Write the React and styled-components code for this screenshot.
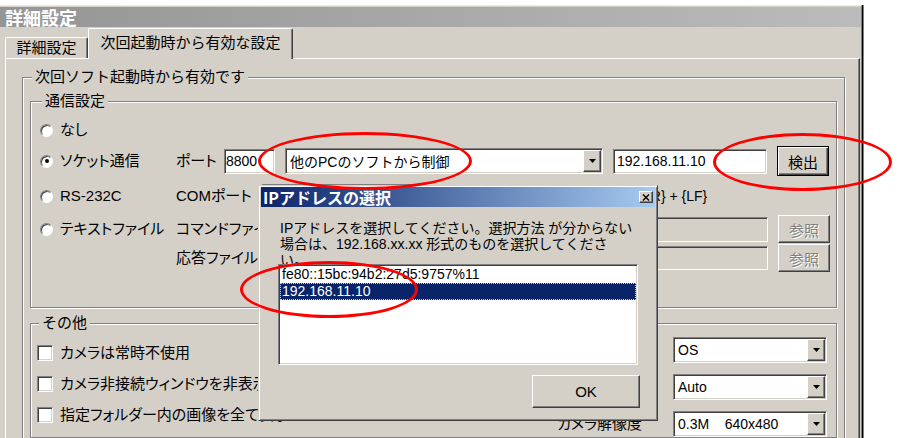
import styled, { createGlobalStyle, css } from "styled-components";

const FACE = "#d4d0c8";

const GlobalStyle = createGlobalStyle`
  html, body { margin: 0; padding: 0; background: #fff; }
  body {
    font-family: "Liberation Sans", "Noto Sans CJK JP", sans-serif;
    font-size: 15px;
    color: #000;
  }
  #root { position: relative; width: 900px; height: 438px; overflow: hidden; }
`;

const sunken = css`
  border: 1px solid;
  border-color: #808080 #fff #fff #808080;
  box-shadow: inset 1px 1px 0 #404040, inset -1px -1px 0 ${FACE};
`;

const raised = css`
  border: 1px solid;
  border-color: #fff #404040 #404040 #fff;
  box-shadow: inset -1px -1px 0 #808080;
`;

const Screen = styled.div`
  height: 438px;
  padding-top: 5px;
  box-sizing: border-box;
`;

const Window = styled.div`
  width: 862px;
  height: 100%;
  box-sizing: border-box;
  background: ${FACE};
  border-top: 1px solid #ecebe6;
  border-right: 1px solid #808080;
  box-shadow: 1px 0 0 #000, 2px 0 0 #808080;
  padding-top: 1px;
  display: flex;
  flex-direction: column;
`;

const TitleBar = styled.div`
  height: 20px;
  flex-shrink: 0;
  padding-left: 5px;
  background: linear-gradient(90deg, #959595, #bbbbbb);
  color: #fff;
  font-family: "Noto Sans CJK JP", sans-serif;
  font-weight: bold;
  font-size: 18px;
  line-height: 20px;
`;

const TabStrip = styled.div`
  height: 31px;
  flex-shrink: 0;
  display: flex;
  align-items: flex-end;
  padding-left: 5px;
`;

const Tab = styled.div`
  position: relative;
  z-index: ${(p) => (p.$active ? 2 : 0)};
  width: ${(p) => p.$w}px;
  height: ${(p) => (p.$active ? 31 : 21)}px;
  margin-bottom: ${(p) => (p.$active ? -1 : 0)}px;
  box-sizing: border-box;
  padding-bottom: ${(p) => (p.$active ? 3 : 0)}px;
  background: ${FACE};
  border-top: 1px solid #fff;
  border-left: 1px solid #fff;
  border-right: 1px solid #404040;
  box-shadow: inset -1px 0 0 #808080;
  border-radius: 2px 2px 0 0;
  display: flex;
  align-items: center;
  justify-content: center;
  font-size: 15px;
  line-height: 18px;
  white-space: nowrap;
`;

const Panel = styled.div`
  flex: 1;
  min-height: 0;
  margin: 0 1px 0 5px;
  background: ${FACE};
  border-top: 1px solid #fff;
  border-left: 1px solid #fff;
  border-right: 1px solid #404040;
  box-shadow: inset -1px 0 0 #808080;
  padding: 10px 14px 0 16px;
`;

const Group = styled.fieldset`
  margin: ${(p) => p.$mt || 0}px 0 0 0;
  padding: ${(p) => p.$pad};
  border: 1px solid #808080;
  box-shadow: inset 1px 1px 0 #fff, 1px 1px 0 #fff;
  min-width: 0;
`;

const Legend = styled.legend`
  margin-left: 2px;
  padding: 0 3px;
  background: ${FACE};
  font-size: 15px;
  line-height: 16px;
  white-space: nowrap;
`;

const Rows = styled.div`
  display: flex;
  flex-direction: column;
`;

const Row = styled.div`
  display: flex;
  align-items: center;
  height: ${(p) => p.$h}px;
`;

const Choice = styled.label`
  width: 136px;
  flex-shrink: 0;
  display: flex;
  align-items: center;
  gap: 7px;
`;

const RadioMark = styled.span`
  width: 13px;
  height: 13px;
  box-sizing: border-box;
  flex-shrink: 0;
  border-radius: 50%;
  background: #fff;
  border: 1px solid;
  border-color: #808080 #fff #fff #808080;
  box-shadow: inset 1px 1px 0 #404040;
  display: flex;
  align-items: center;
  justify-content: center;

  &::after {
    content: "";
    display: ${(p) => (p.$on ? "block" : "none")};
    width: 4px;
    height: 4px;
    border-radius: 50%;
    background: #000;
  }
`;

const CheckMark = styled.span`
  width: 16px;
  height: 16px;
  box-sizing: border-box;
  flex-shrink: 0;
  background: #fff;
  ${sunken};
`;

const Caption = styled.span`
  font-size: 15px;
  line-height: 18px;
  white-space: nowrap;
  font-feature-settings: "palt";
`;

const FieldLabel = styled.span`
  width: ${(p) => p.$w}px;
  flex-shrink: 0;
  font-size: 15px;
  line-height: 18px;
  white-space: nowrap;
  font-feature-settings: "palt";
`;

const TextInput = styled.input`
  width: ${(p) => p.$w}px;
  height: ${(p) => p.$h}px;
  margin: 0 ${(p) => p.$mr || 0}px 0 0;
  padding: 0 0 0 ${(p) => p.$pl ?? 3}px;
  box-sizing: border-box;
  flex-shrink: 0;
  ${sunken};
  background: ${(p) => (p.disabled ? FACE : "#fff")};
  color: #000;
  font: 14px "Liberation Sans", sans-serif;
  outline: none;
`;

const Combo = styled.div`
  width: ${(p) => p.$w}px;
  height: ${(p) => p.$h || 26}px;
  margin-right: ${(p) => p.$mr || 0}px;
  box-sizing: border-box;
  flex-shrink: 0;
  ${sunken};
  padding: 1px;
  background: #fff;
  display: flex;
`;

const ComboValue = styled.span`
  flex: 1;
  display: flex;
  align-items: center;
  padding-left: 3px;
  font-size: 14px;
  white-space: pre;
  overflow: hidden;
`;

const DropButton = styled.span`
  width: 18px;
  box-sizing: border-box;
  background: ${FACE};
  ${raised};
  display: flex;
  align-items: center;
  justify-content: center;
`;

const PushButton = styled.button`
  width: ${(p) => p.$w}px;
  height: ${(p) => p.$h}px;
  padding: 0;
  flex-shrink: 0;
  box-sizing: border-box;
  background: ${FACE};
  font: 15px "Liberation Sans", "Noto Sans CJK JP", sans-serif;
  color: ${(p) => (p.disabled ? "#808080" : "#000")};
  text-shadow: ${(p) => (p.disabled ? "1px 1px 0 #fff" : "none")};
  ${(p) =>
    p.$default
      ? css`
          border: 1px solid #000;
          box-shadow: inset 1px 1px 0 #fff, inset -1px -1px 0 #404040,
            inset -2px -2px 0 #808080;
        `
      : raised};
`;

const Note = styled.span`
  margin-left: ${(p) => p.$ml}px;
  font-size: 14px;
  white-space: nowrap;
`;

const OtherBody = styled.div`
  display: flex;
  justify-content: space-between;
`;

const CheckList = styled.div`
  display: flex;
  flex-direction: column;
`;

const CheckRow = styled.label`
  height: 31px;
  display: flex;
  align-items: center;
  gap: 7px;
`;

const SelectList = styled.div`
  display: flex;
  flex-direction: column;
  gap: 11px;
`;

const SelectRow = styled.div`
  display: flex;
  align-items: center;
  justify-content: flex-end;
  gap: 31px;
`;

/* IP address dialog, lying over the settings window */
const Dialog = styled.div`
  position: absolute;
  left: 258px;
  top: 185px;
  width: 400px;
  height: 236px;
  box-sizing: border-box;
  background: ${FACE};
  border: 1px solid;
  border-color: ${FACE} #404040 #404040 ${FACE};
  box-shadow: inset 1px 1px 0 #fff, inset -1px -1px 0 #808080;
  padding: 1px 2px 2px 2px;
  display: flex;
  flex-direction: column;
  z-index: 5;
`;

const DialogTitle = styled.div`
  height: 20px;
  flex-shrink: 0;
  padding: 0 2px;
  background: linear-gradient(90deg, #0a246a, #a6caf0);
  color: #fff;
  display: flex;
  align-items: center;
  justify-content: space-between;
  font-family: "Noto Sans CJK JP", sans-serif;
  font-weight: bold;
  font-size: 16px;
`;

const CloseBox = styled.span`
  width: 14px;
  height: 12px;
  box-sizing: border-box;
  background: ${FACE};
  ${raised};
  display: flex;
  align-items: center;
  justify-content: center;
`;

const DialogBody = styled.div`
  flex: 1;
  padding: 13px 17px 0 17px;
  display: flex;
  flex-direction: column;
`;

const Message = styled.div`
  height: 44px;
  overflow: hidden;
  padding-left: 2px;
  font-size: 14px;
  line-height: 16px;
`;

const MessageLine = styled.div`
  white-space: nowrap;
`;

const ListBox = styled.div`
  height: 101px;
  box-sizing: border-box;
  ${sunken};
  padding: 1px;
  background: #fff;
`;

const ListItem = styled.div`
  height: 17px;
  padding-left: 2px;
  font-size: 14px;
  line-height: 17px;
  white-space: nowrap;
  background: ${(p) => (p.$selected ? "#0a246a" : "transparent")};
  color: ${(p) => (p.$selected ? "#fff" : "#000")};
  outline: ${(p) => (p.$selected ? "1px dotted #e6d37a" : "none")};
  outline-offset: -1px;
`;

const DialogActions = styled.div`
  display: flex;
  justify-content: flex-end;
  margin: 10px -2px 0 0;
`;

const Mark = styled.div`
  position: absolute;
  left: ${(p) => p.$x}px;
  top: ${(p) => p.$y}px;
  width: ${(p) => p.$w}px;
  height: ${(p) => p.$h}px;
  box-sizing: border-box;
  border: 3px solid #f00;
  border-radius: 50%;
  pointer-events: none;
  z-index: 10;
`;

const Arrow = () => (
  <svg width="7" height="4" viewBox="0 0 7 4">
    <path d="M0 0h7L3.5 4z" fill="#000" />
  </svg>
);

const Select = ({ w, h, mr, value }) => (
  <Combo $w={w} $h={h} $mr={mr}>
    <ComboValue>{value}</ComboValue>
    <DropButton>
      <Arrow />
    </DropButton>
  </Combo>
);

const IpDialog = () => (
  <Dialog>
    <DialogTitle>
      IPアドレスの選択
      <CloseBox>
        <svg width="8" height="7" viewBox="0 0 8 7">
          <path d="M1 0.5l6 6M7 0.5l-6 6" stroke="#000" strokeWidth="1.4" />
        </svg>
      </CloseBox>
    </DialogTitle>
    <DialogBody>
      <Message>
        <MessageLine>IPアドレスを選択してください。選択方法 が分からない</MessageLine>
        <MessageLine>場合は、192.168.xx.xx 形式のものを選択してくださ</MessageLine>
        <MessageLine>い。</MessageLine>
      </Message>
      <ListBox>
        <ListItem>fe80::15bc:94b2:27d5:9757%11</ListItem>
        <ListItem $selected>192.168.11.10</ListItem>
      </ListBox>
      <DialogActions>
        <PushButton $w={108} $h={33}>OK</PushButton>
      </DialogActions>
    </DialogBody>
  </Dialog>
);

export default function App() {
  return (
    <>
      <GlobalStyle />
      <Screen>
        <Window>
          <TitleBar>詳細設定</TitleBar>
          <TabStrip>
            <Tab $w={83}>詳細設定</Tab>
            <Tab $w={205} $active>次回起動時から有効な設定</Tab>
          </TabStrip>
          <Panel>
            <Group $pad="8px 7px 0 7px">
              <Legend>次回ソフト起動時から有効です</Legend>

              <Group $pad="9px 5px 37px 9px">
                <Legend>通信設定</Legend>
                <Rows>
                  <Row $h={24}>
                    <Choice>
                      <RadioMark />
                      <Caption>なし</Caption>
                    </Choice>
                  </Row>
                  <Row $h={38}>
                    <Choice>
                      <RadioMark $on />
                      <Caption>ソケット通信</Caption>
                    </Choice>
                    <FieldLabel $w={48}>ポート</FieldLabel>
                    <TextInput $w={51} $h={25} $mr={10} $pl={1} defaultValue="8800" readOnly />
                    <Select w={318} mr={10} value="他のPCのソフトから制御" />
                    <TextInput $w={154} $h={25} $mr={10} defaultValue="192.168.11.10" readOnly />
                    <PushButton $w={52} $h={30} $default>検出</PushButton>
                  </Row>
                  <Row $h={32}>
                    <Choice>
                      <RadioMark />
                      <Caption>RS-232C</Caption>
                    </Choice>
                    <FieldLabel $w={86}>COMポート</FieldLabel>
                    <Select w={150} h={24} value="" />
                    <Note $ml={224}>{"{CR} + {LF}"}</Note>
                  </Row>
                  <Row $h={34}>
                    <Choice>
                      <RadioMark />
                      <Caption>テキストファイル</Caption>
                    </Choice>
                    <FieldLabel $w={86}>コマンドファイル</FieldLabel>
                    <TextInput $w={506} $h={25} $mr={10} disabled />
                    <PushButton $w={52} $h={28} disabled>参照</PushButton>
                  </Row>
                  <Row $h={24}>
                    <Choice />
                    <FieldLabel $w={86}>応答ファイル</FieldLabel>
                    <TextInput $w={506} $h={24} $mr={10} disabled />
                    <PushButton $w={52} $h={28} disabled>参照</PushButton>
                  </Row>
                </Rows>
              </Group>

              <Group $mt={7} $pad="6px 9px 0 6px">
                <Legend>その他</Legend>
                <OtherBody>
                  <CheckList>
                    <CheckRow>
                      <CheckMark />
                      <Caption>カメラは常時不使用</Caption>
                    </CheckRow>
                    <CheckRow>
                      <CheckMark />
                      <Caption>カメラ非接続ウィンドウを非表示にする</Caption>
                    </CheckRow>
                    <CheckRow>
                      <CheckMark />
                      <Caption>指定フォルダー内の画像を全て表示</Caption>
                    </CheckRow>
                  </CheckList>
                  <SelectList>
                    <SelectRow>
                      <Select w={154} value="OS" />
                    </SelectRow>
                    <SelectRow>
                      <Select w={154} value="Auto" />
                    </SelectRow>
                    <SelectRow>
                      <Caption>カメラ解像度</Caption>
                      <Select w={154} value="0.3M    640x480" />
                    </SelectRow>
                  </SelectList>
                </OtherBody>
              </Group>
            </Group>
          </Panel>
        </Window>
      </Screen>

      <IpDialog />

      <Mark $x={258} $y={132} $w={214} $h={58} />
      <Mark $x={713} $y={133} $w={179} $h={58} />
      <Mark $x={240} $y={261} $w={178} $h={57} />
    </>
  );
}
